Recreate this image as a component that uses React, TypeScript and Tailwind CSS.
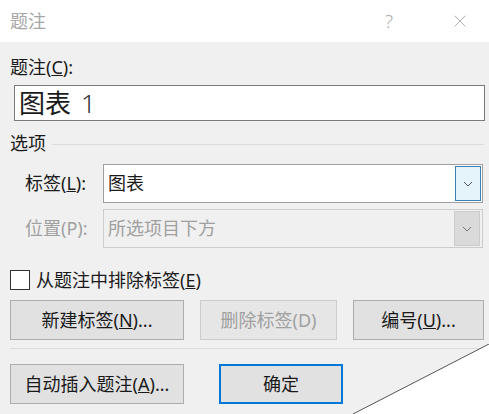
import { X } from "lucide-react"

const font = "font-['Noto_Sans','Noto_Sans_CJK_SC',sans-serif]"

function Chevron({ color }: { color: string }) {
  return (
    <svg width="10" height="6" viewBox="0 0 10 6" fill="none">
      <path d="M1 1l4 4 4-4" stroke={color} strokeWidth="1" />
    </svg>
  )
}

function Btn({
  children,
  className = "",
  disabled = false,
  primary = false,
}: {
  children: React.ReactNode
  className?: string
  disabled?: boolean
  primary?: boolean
}) {
  return (
    <button
      className={`flex h-[40px] items-center justify-center text-[18px] ${
        disabled
          ? "border border-[#cccccc] bg-[#e6e6e6] text-[#a0a0a0]"
          : primary
          ? "border-2 border-[#0078d7] bg-[#e1e1e1] text-[#1a1a1a]"
          : "border border-[#adadad] bg-[#e1e1e1] text-[#1a1a1a]"
      } ${className}`}
    >
      {children}
    </button>
  )
}

export default function App() {
  return (
    <div className={`relative flex h-[414px] w-[489px] flex-col overflow-hidden bg-white ${font}`}>
      {/* title bar */}
      <div className="flex h-[42px] items-center bg-white pl-[10px]">
        <span className="text-[18px] text-[#a6a6a6]">题注</span>
        <span className="ml-auto mr-[57px] text-[19px] font-light text-[#b0b0b0]">?</span>
        <X className="mr-[19px] h-[20px] w-[20px] text-[#9a9a9a]" strokeWidth={1} />
      </div>

      <div className="flex flex-1 flex-col bg-[#f0f0f0] pt-[13px] text-[18px] text-[#1a1a1a]">
        <div className="pl-[10px] leading-[24px]">
          题注(<u>C</u>):
        </div>
        <div className="ml-[14px] mt-[6px] flex h-[36px] w-[471px] items-center border border-[#7a7a7a] bg-white pl-[4px]">
          <span className="text-[26px] leading-none">图表</span>
          <span className="ml-[10px] text-[26px] font-light leading-none text-[#333]">1</span>
        </div>

        {/* group 选项 */}
        <div className="mt-[10px] flex items-center pl-[10px] leading-[24px]">
          <span>选项</span>
          <div className="ml-[6px] mr-[5px] mt-[3px] h-px flex-1 bg-[#dcdcdc]" />
        </div>

        <div className="mt-[9px] flex h-[39px] items-center">
          <span className="w-[103px] pl-[25px]">
            标签(<u>L</u>):
          </span>
          <div className="flex h-[39px] w-[380px] items-center border border-[#a0a0a0] bg-white pl-[4px] pr-[1px]">
            <span>图表</span>
            <div className="ml-auto flex h-[35px] w-[26px] items-center justify-center border border-[#3c7fb1] bg-[#e5f3fb]">
              <Chevron color="#555" />
            </div>
          </div>
        </div>

        <div className="mt-[6px] flex h-[39px] items-center text-[#a0a0a0]">
          <span className="w-[103px] pl-[25px]">位置(P):</span>
          <div className="flex h-[39px] w-[380px] items-center border border-[#cccccc] bg-[#f0f0f0] pl-[4px] pr-[2px]">
            <span>所选项目下方</span>
            <div className="ml-auto flex h-[35px] w-[26px] items-center justify-center border border-[#cccccc] bg-[#dadada]">
              <Chevron color="#777" />
            </div>
          </div>
        </div>

        <div className="mt-[20px] flex items-center pl-[10px] leading-[24px]">
          <div className="h-[20px] w-[20px] border border-[#333] bg-white" />
          <span className="ml-[6px]">
            从题注中排除标签(<u>E</u>)
          </span>
        </div>

        <div className="mt-[8px] flex pl-[10px]">
          <Btn className="w-[174px]">
            新建标签(<u>N</u>)...
          </Btn>
          <Btn disabled className="ml-[16px] w-[137px]">
            删除标签(D)
          </Btn>
          <Btn className="ml-[16px] w-[131px]">
            编号(<u>U</u>)...
          </Btn>
        </div>

        <div className="mt-[8px] ml-[10px] h-px bg-[#dcdcdc]" />

        <div className="mt-[15px] flex pl-[10px]">
          <Btn className="w-[174px]">
            自动插入题注(<u>A</u>)...
          </Btn>
          <Btn primary className="ml-[35px] w-[124px]">
            确定
          </Btn>
        </div>
      </div>

      {/* page curl corner */}
      <svg className="absolute bottom-0 right-0" width="136" height="70" viewBox="0 0 136 70">
        <polygon points="0,70 136,0 136,70" fill="#ffffff" />
        <line x1="0" y1="70" x2="136" y2="0" stroke="#555" strokeWidth="1" />
      </svg>
    </div>
  )
}
